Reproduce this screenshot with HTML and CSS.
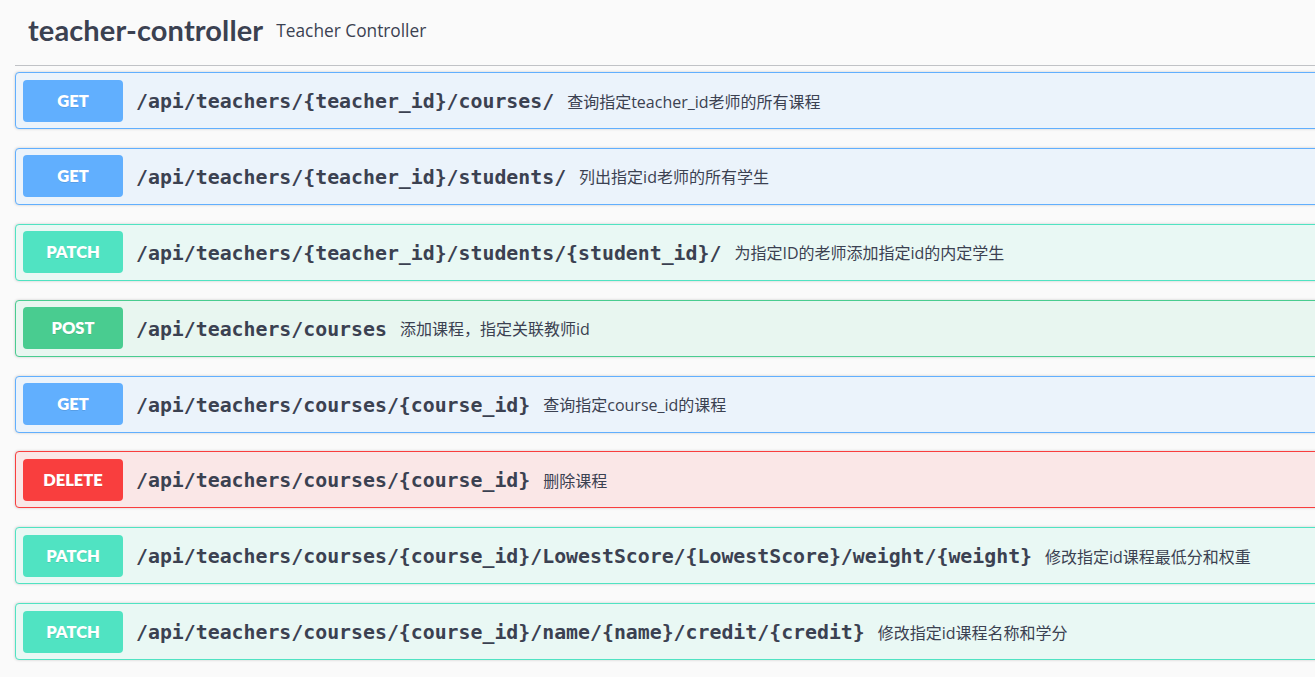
FILE: index.html
```
<!DOCTYPE html>
<html lang="zh">
<head>
<meta charset="utf-8">
<title>teacher-controller</title>
<link rel="stylesheet" href="styles.css">
</head>
<body>
<div class="tag-section">
  <h4 class="tag-header">
    <span class="tag-name">teacher-controller</span>
    <small class="tag-desc">Teacher Controller</small>
  </h4>
  <div class="ops">
    <div class="op op-get">
      <span class="method">GET</span>
      <span class="path">/api/teachers/{teacher_id}/courses/</span>
      <span class="summary">查询指定teacher_id老师的所有课程</span>
    </div>
    <div class="op op-get">
      <span class="method">GET</span>
      <span class="path">/api/teachers/{teacher_id}/students/</span>
      <span class="summary">列出指定id老师的所有学生</span>
    </div>
    <div class="op op-patch">
      <span class="method">PATCH</span>
      <span class="path">/api/teachers/{teacher_id}/students/{student_id}/</span>
      <span class="summary">为指定ID的老师添加指定id的内定学生</span>
    </div>
    <div class="op op-post">
      <span class="method">POST</span>
      <span class="path">/api/teachers/courses</span>
      <span class="summary">添加课程，指定关联教师id</span>
    </div>
    <div class="op op-get">
      <span class="method">GET</span>
      <span class="path">/api/teachers/courses/{course_id}</span>
      <span class="summary">查询指定course_id的课程</span>
    </div>
    <div class="op op-delete">
      <span class="method">DELETE</span>
      <span class="path">/api/teachers/courses/{course_id}</span>
      <span class="summary">删除课程</span>
    </div>
    <div class="op op-patch">
      <span class="method">PATCH</span>
      <span class="path">/api/teachers/courses/{course_id}/LowestScore/{LowestScore}/weight/{weight}</span>
      <span class="summary">修改指定id课程最低分和权重</span>
    </div>
    <div class="op op-patch">
      <span class="method">PATCH</span>
      <span class="path">/api/teachers/courses/{course_id}/name/{name}/credit/{credit}</span>
      <span class="summary">修改指定id课程名称和学分</span>
    </div>
  </div>
</div>
</body>
</html>
```
FILE: styles.css
```
html, body {
  margin: 0;
  padding: 0;
  background: #fafafa;
  overflow: hidden;
}

body {
  color: #3b4151;
  font-family: "Open Sans", "Noto Sans CJK SC", sans-serif;
}

.tag-section {
  width: 1340px;
  padding-left: 15px;
}

.tag-header {
  margin: 0;
  height: 66px;
  box-sizing: border-box;
  border-bottom: 1px solid rgba(59, 65, 81, 0.3);
  display: flex;
  align-items: center;
  padding: 0 0 7px 13px;
  font-weight: normal;
}

.tag-name {
  font-family: "Lato", "Noto Sans", sans-serif;
  font-weight: 700;
  font-size: 29px;
  letter-spacing: 0.12px;
  color: #3b4151;
}

.tag-desc {
  margin-left: 13px;
  font-family: "Open Sans", sans-serif;
  font-size: 17.3px;
  color: #3b4151;
  padding-top: 2px;
}

.ops {
  padding-top: 6px;
}

.op {
  display: flex;
  align-items: center;
  height: 57px;
  box-sizing: border-box;
  padding: 0 7px;
  margin-bottom: 18.9px;
  border: 1px solid;
  border-radius: 4px;
  box-shadow: 0 0 3px rgba(0, 0, 0, 0.19);
}

.method {
  flex: none;
  width: 100px;
  height: 42px;
  border-radius: 4px;
  display: flex;
  align-items: center;
  justify-content: center;
  color: #fff;
  font-family: "Lato", "Noto Sans", sans-serif;
  font-weight: 800;
  font-size: 16.5px;
  text-shadow: 0 1px 0 rgba(0, 0, 0, 0.1);
}

.path {
  margin-left: 13px;
  padding-top: 2px;
  font-family: "DejaVu Sans Mono", monospace;
  font-weight: 700;
  font-size: 19.85px;
  color: #3b4151;
  white-space: nowrap;
}

.summary {
  margin-left: 13px;
  font-family: "Open Sans", "Noto Sans CJK SC", sans-serif;
  font-size: 16px;
  color: #3b4151;
  white-space: nowrap;
}

.op-get { background: #ebf3fb; border-color: #61affe; }
.op-get .method { background: #61affe; }

.op-patch { background: #e9f8f4; border-color: #50e3c2; }
.op-patch .method { background: #50e3c2; }

.op-post { background: #e8f6f0; border-color: #49cc90; }
.op-post .method { background: #49cc90; }

.op-delete { background: #fae7e7; border-color: #f93e3e; }
.op-delete .method { background: #f93e3e; }
```
